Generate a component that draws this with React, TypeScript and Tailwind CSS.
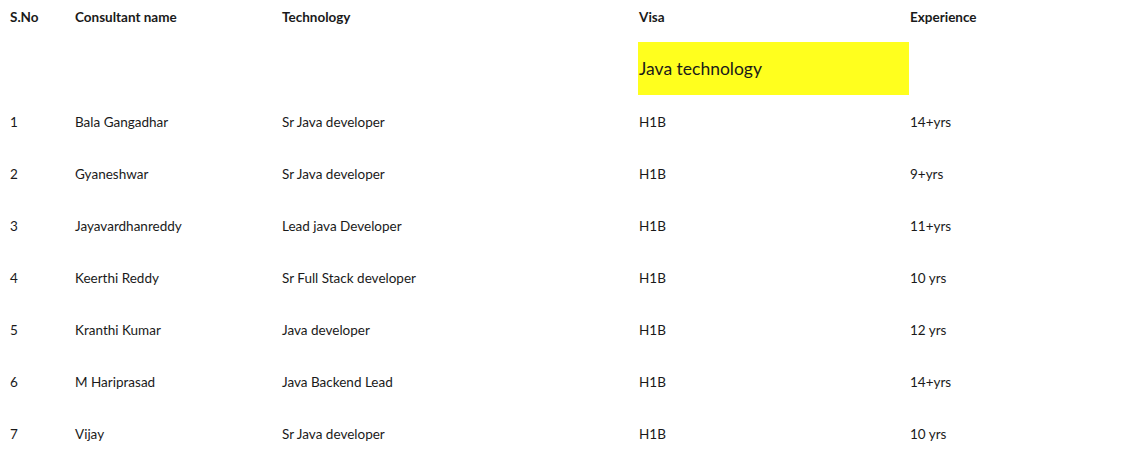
const rows: Array<[string, string, string, string, string]> = [
  ["1", "Bala Gangadhar", "Sr Java developer", "H1B", "14+yrs"],
  ["2", "Gyaneshwar", "Sr Java developer", "H1B", "9+yrs"],
  ["3", "Jayavardhanreddy", "Lead java Developer", "H1B", "11+yrs"],
  ["4", "Keerthi Reddy", "Sr Full Stack developer", "H1B", "10 yrs"],
  ["5", "Kranthi Kumar", "Java developer", "H1B", "12 yrs"],
  ["6", "M Hariprasad", "Java Backend Lead", "H1B", "14+yrs"],
  ["7", "Vijay", "Sr Java developer", "H1B", "10 yrs"],
];

const cols = "grid grid-cols-[65px_207px_357px_271px_1fr]";

export default function App() {
  return (
    <div className="min-h-[454px] bg-white pl-[9px] text-[13.5px] text-[#1a1a1a] [font-family:Lato,'Open_Sans',sans-serif]">
      <div className={`${cols} h-[34px] items-center font-bold`}>
        <div className="pl-px">S.No</div>
        <div className="pl-px">Consultant name</div>
        <div className="pl-px">Technology</div>
        <div className="pl-px">Visa</div>
        <div className="pl-px">Experience</div>
      </div>
      <div className={`${cols} mt-[8px] h-[53px]`}>
        <div />
        <div />
        <div />
        <div className="flex items-center bg-[#ffff1e] pl-px pt-[2px] text-[17.5px]">Java technology</div>
        <div />
      </div>
      {rows.map(([n, name, tech, visa, exp]) => (
        <div key={n} className={`${cols} h-[52px] items-center pt-[2px]`}>
          <div className="pl-px">{n}</div>
          <div className="pl-px">{name}</div>
          <div className="pl-px">{tech}</div>
          <div className="pl-px">{visa}</div>
          <div className="pl-px">{exp}</div>
        </div>
      ))}
    </div>
  );
}
